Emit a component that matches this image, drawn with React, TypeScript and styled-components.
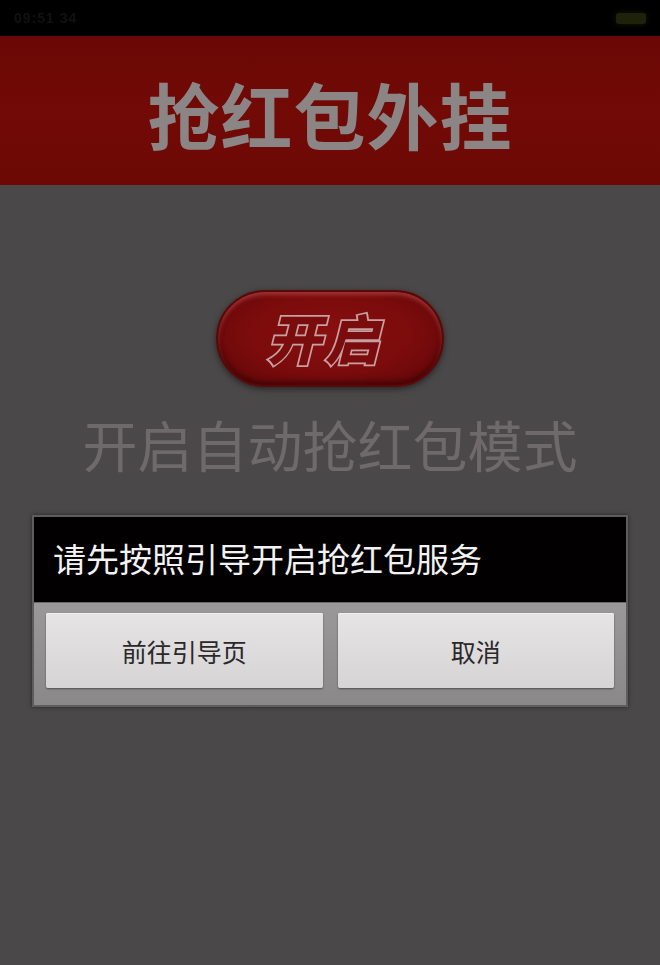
import React from "react";
import styled, { createGlobalStyle } from "styled-components";

const Global = createGlobalStyle`
  html, body { margin: 0; padding: 0; background: #4a4849; }
  body { font-family: "Noto Sans CJK SC", "Noto Sans", sans-serif; }
  * { box-sizing: border-box; }
`;

const Screen = styled.div`
  width: 660px;
  height: 965px;
  background: #4a4849;
  display: flex;
  flex-direction: column;
  align-items: center;
  overflow: hidden;
`;

const StatusBar = styled.div`
  width: 100%;
  height: 36px;
  background: #000;
  display: flex;
  align-items: center;
  justify-content: space-between;
  padding: 0 14px 0 14px;
  flex-shrink: 0;
`;

const Clock = styled.span`
  font-family: "Liberation Sans", sans-serif;
  font-size: 14px;
  font-weight: bold;
  color: #111;
  letter-spacing: 1px;
  filter: blur(0.6px);
`;

const Battery = styled.div`
  width: 30px;
  height: 11px;
  border-radius: 3px;
  background: #1f220b;
  box-shadow: 0 0 6px #161a06;
`;

const Header = styled.div`
  width: 100%;
  height: 149px;
  background: linear-gradient(#6a0805, #720a06 50%, #6c0905);
  display: flex;
  align-items: center;
  justify-content: center;
  flex-shrink: 0;
`;

const Title = styled.h1`
  margin: 0;
  font-size: 72px;
  font-weight: 700;
  line-height: 1;
  color: #8c8586;
  letter-spacing: 1px;
  transform: translateY(2px);
`;

const PillButton = styled.button`
  margin-top: 105px;
  width: 228px;
  height: 97px;
  border-radius: 49px;
  border: 2px solid #5a0808;
  background: radial-gradient(ellipse at 50% 45%, #8a0f10 0%, #7a0b0c 55%, #5e0607 100%);
  box-shadow: inset 0 3px 4px rgba(200, 90, 90, 0.55), inset 0 -3px 6px rgba(30, 0, 0, 0.6),
    0 2px 6px rgba(0, 0, 0, 0.5);
  display: flex;
  align-items: center;
  justify-content: center;
  padding: 0;
  flex-shrink: 0;
`;

const PillLabel = styled.span`
  font-family: "Noto Sans CJK SC", sans-serif;
  font-size: 54px;
  font-weight: 900;
  line-height: 1;
  color: #7a0c0d;
  -webkit-text-stroke: 3.5px #c7a0a0;
  paint-order: stroke fill;
  letter-spacing: 4px;
  transform: skewX(-14deg) translateY(-2px);
  display: inline-block;
`;

const Subtitle = styled.div`
  margin-top: 29px;
  font-size: 55px;
  line-height: 55px;
  color: #6e6a6b;
  font-weight: 400;
  flex-shrink: 0;
`;

const Dialog = styled.div`
  margin-top: 44px;
  width: 596px;
  border: 2px solid #5e5c5d;
  background: #8d8b8c;
  box-shadow: 0 0 4px rgba(0, 0, 0, 0.5);
  display: flex;
  flex-direction: column;
  flex-shrink: 0;
`;

const Message = styled.div`
  height: 86px;
  background: #020001;
  border-bottom: 1px solid #6a6869;
  color: #f2f2f2;
  font-size: 33px;
  line-height: 1;
  display: flex;
  align-items: center;
  padding: 0 0 2px 19px;
`;

const ButtonRow = styled.div`
  display: grid;
  grid-template-columns: 1fr 1fr;
  gap: 15px;
  padding: 10px 12px 17px 12px;
  background: linear-gradient(#9a9899, #8a8889);
`;

const DialogButton = styled.button`
  height: 75px;
  border: none;
  border-radius: 2px;
  background: linear-gradient(#e6e4e5, #dcdadb 60%, #d6d4d5);
  box-shadow: 0 1px 2px rgba(0, 0, 0, 0.45), inset 0 1px 0 #f2f0f1;
  font-family: "Noto Sans CJK SC", sans-serif;
  font-size: 25px;
  color: #2a2829;
  display: flex;
  align-items: center;
  justify-content: center;
  padding: 0;
`;

export default function App() {
  return (
    <>
      <Global />
      <Screen>
        <StatusBar>
          <Clock>09:51 34</Clock>
          <Battery />
        </StatusBar>
        <Header>
          <Title>抢红包外挂</Title>
        </Header>
        <PillButton>
          <PillLabel>开启</PillLabel>
        </PillButton>
        <Subtitle>开启自动抢红包模式</Subtitle>
        <Dialog>
          <Message>请先按照引导开启抢红包服务</Message>
          <ButtonRow>
            <DialogButton>前往引导页</DialogButton>
            <DialogButton>取消</DialogButton>
          </ButtonRow>
        </Dialog>
      </Screen>
    </>
  );
}
